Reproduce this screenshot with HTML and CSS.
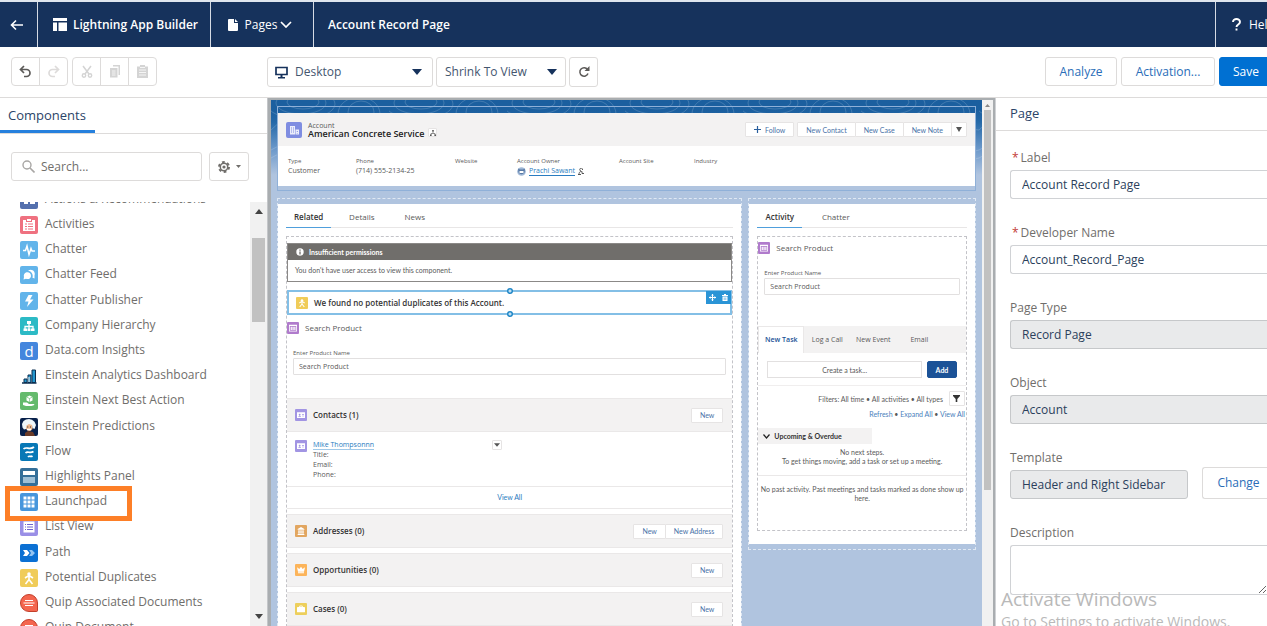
FILE: index.html
```html
<!DOCTYPE html>
<html lang="en">
<head>
<meta charset="utf-8">
<title>Lightning App Builder</title>
<link rel="stylesheet" href="styles.css">
</head>
<body>
<svg class="defs" aria-hidden="true">
  <symbol id="i-down" viewBox="0 0 10 6"><path d="M0 0h10L5 6z" fill="currentColor"/></symbol>
  <symbol id="i-table" viewBox="0 0 18 18"><path d="M3 4h12v2H3zM3 6h1.200v8H3zM13.800 6H15v8h-1.200zM3 13h12v1.200H3zM5.500 7h1.800v5H5.500zM8.200 7h1.800v5H8.200zM10.900 7h1.800v5h-1.800z" fill="#fff"/></symbol>
  <symbol id="i-card" viewBox="0 0 18 18"><path fill="#fff" fill-rule="evenodd" d="M3 5h12v8.500H3zM5 11.500h4c0-2-4-2-4 0zM7 7a1.300 1.300 0 1 0 .01 0zM10.500 7.500h3v1h-3zM10.500 10h3v1h-3z"/></symbol>
  <symbol id="i-dup" viewBox="0 0 18 18"><circle cx="9" cy="5" r="1.800" fill="#fff"/><path d="M5 9l4-2.500L13 9M9 7v4M5.500 15L9 10.500l3.500 4.500" fill="none" stroke="#fff" stroke-width="1.600"/></symbol>
</svg>

<header class="topbar">
  <button class="top-item back" aria-label="Back"><svg width="14" height="12" viewBox="0 0 14 12"><path d="M13 6H2M6 1.500L1.500 6 6 10.500" fill="none" stroke="#fff" stroke-width="1.600"/></svg></button>
  <div class="top-item brand"><svg width="14" height="13" viewBox="0 0 14 13"><path d="M0 0h14v3H0zM0 4.500h4V13H0zM5.500 4.500H14V13H5.500z" fill="#fff"/></svg><strong>Lightning App Builder</strong></div>
  <button class="top-item pages"><svg width="10" height="12" viewBox="0 0 10 12"><path d="M1 0h5v4h4v7q0 1-1 1H1q-1 0-1-1V1q0-1 1-1zM7 0l3 3H7z" fill="#fff"/></svg>Pages<svg class="chev" width="12" height="7" viewBox="0 0 12 7"><path d="M1 1l5 5 5-5" fill="none" stroke="#fff" stroke-width="1.700"/></svg></button>
  <div class="top-item title"><strong>Account Record Page</strong></div>
  <a class="top-item help" href="#"><svg width="9" height="13" viewBox="0 0 9 13"><path d="M1 4C1 0 8 0 8 4c0 2.500-3.500 2.500-3.500 5M4.500 10.500v2" fill="none" stroke="#fff" stroke-width="1.900"/></svg>Help</a>
</header>

<div class="toolbar">
  <div class="group">
    <button aria-label="Undo"><svg width="13" height="13" viewBox="0 0 13 13"><path d="M5 1L1.500 4.500 5 8M2 4.500h5.500a3.500 3.500 0 0 1 0 7H5" fill="none" stroke="#5c5a58" stroke-width="1.700"/></svg></button>
    <button aria-label="Redo" disabled><svg width="13" height="13" viewBox="0 0 13 13"><path d="M8 1l3.500 3.500L8 8M11 4.500H5.500a3.500 3.500 0 0 0 0 7H8" fill="none" stroke="#dddbda" stroke-width="1.700"/></svg></button>
  </div>
  <div class="group">
    <button aria-label="Cut" disabled><svg width="12" height="13" viewBox="0 0 12 13"><path d="M2 1l6 8M10 1L4 9" stroke="#d4d4d4" stroke-width="1.500"/><g fill="none" stroke="#d4d4d4" stroke-width="1.400"><circle cx="3" cy="10.500" r="1.700"/><circle cx="9" cy="10.500" r="1.700"/></g></svg></button>
    <button aria-label="Copy" disabled><svg width="12" height="13" viewBox="0 0 12 13"><path d="M4 0h7v10h-1.500V1.500H4zM1 3h7.500v9.500H1z" fill="#d4d4d4"/><path d="M3 6h3.500M3 8h3.500M3 10h3.500" stroke="#f3f3f3"/></svg></button>
    <button aria-label="Paste" disabled><svg width="11" height="13" viewBox="0 0 11 13"><path d="M0 1.500h3V0h5v1.500h3V13H0z" fill="#d4d4d4"/><path d="M2 5h7M2 7.500h7M2 10h7M3 2.500h5" stroke="#f5f5f5"/></svg></button>
  </div>
  <div class="view-tools">
    <button class="picker device"><svg width="13" height="13" viewBox="0 0 13 13"><path d="M1 1.500h11v7H1z" fill="none" stroke="#16325c" stroke-width="1.700"/><path d="M5.500 9h2v2H10v1.500H3V11h2.500z" fill="#16325c"/></svg><span>Desktop</span><svg class="tri" width="10" height="6"><use href="#i-down"/></svg></button>
    <button class="picker zoom"><span>Shrink To View</span><svg class="tri" width="10" height="6"><use href="#i-down"/></svg></button>
    <button class="picker refresh" aria-label="Refresh"><svg width="12" height="12" viewBox="0 0 12 12"><path d="M9.500 3.500A4.200 4.200 0 1 0 10 7.500" fill="none" stroke="#5c5a58" stroke-width="1.500"/><path d="M11.500 0v5H6.500z" fill="#5c5a58"/></svg></button>
  </div>
  <div class="actions"><button class="analyze">Analyze</button><button class="activation">Activation...</button><button class="save">Save</button></div>
</div>

<main class="workspace">
  <aside class="components">
    <h2>Components</h2>
    <div class="search-row">
      <label class="search"><svg width="13" height="13" viewBox="0 0 13 13"><circle cx="5" cy="5" r="4" fill="none" stroke="#a8a6a4" stroke-width="1.400"/><path d="M8 8l4.500 4.500" stroke="#a8a6a4" stroke-width="1.600"/></svg><input type="text" placeholder="Search..." aria-label="Search components"></label>
      <button class="gear" aria-label="Settings"><svg width="12" height="12" viewBox="0 0 12 12"><circle cx="6" cy="6" r="5" fill="none" stroke="#706e6b" stroke-width="2" stroke-dasharray="2.700 2.536"/><circle cx="6" cy="6" r="3.700" fill="none" stroke="#706e6b" stroke-width="1.500"/><circle cx="6" cy="6" r="1.600" fill="#706e6b"/></svg><svg class="tri" width="5" height="3"><use href="#i-down"/></svg></button>
    </div>
    <div class="list-wrap">
      <ul class="component-list">
        <li><svg class="ico indigo" viewBox="0 0 18 18"><path d="M4 4h4v9H4zM10 6h5v2h-5zM10 10h5v3h-5z" fill="#fff"/></svg>Actions &amp; Recommendations</li>
        <li><svg class="ico pink" viewBox="0 0 18 18"><path d="M3 4h3v2h6V4h3v11H3zM7 3h4v2H7z" fill="#fff"/><path d="M5 8h2M8 8h5M5 10.500h2M8 10.500h5M5 13h2M8 13h5" stroke="#ef7180"/></svg>Activities</li>
        <li><svg class="ico sky" viewBox="0 0 18 18"><path d="M3 9.500h2.500L7 5l2 8.500 2-6 1 2.500h3" fill="none" stroke="#fff" stroke-width="1.500"/></svg>Chatter</li>
        <li><svg class="ico sky" viewBox="0 0 18 18"><path d="M8 4.500c4-2.500 8 1 6.500 5v3l-2-.8c1-3-1-6.500-4.500-7.200z" fill="#fff"/><path d="M3.500 13.500l.5-2.500c-1.500-6 7.500-6.500 7-.8-.4 3-3.500 3.300-5 2.600z" fill="#fff"/></svg>Chatter Feed</li>
        <li><svg class="ico sky" viewBox="0 0 18 18"><path d="M8.500 3h4L10 7.500h3.500L7 15l1.500-5.500H5z" fill="#fff"/></svg>Chatter Publisher</li>
        <li><svg class="ico teal" viewBox="0 0 18 18"><path d="M7 4h4v3H7zM3.500 11.500h3.500V14H3.500zM7.500 11.500h3V14h-3zM11 11.500h3.500V14H11z" fill="#fff"/><path d="M9 6v6M5 12V9.500h8V12" fill="none" stroke="#fff" stroke-width="1.300"/></svg>Company Hierarchy</li>
        <li><span class="ico blue letter">d</span>Data.com Insights</li>
        <li><svg class="ico" viewBox="0 0 18 18"><path d="M4 12h3v3.500H4zM8 8h3v7.500H8zM12 3h3.500v12.500H12z" fill="#2496cd" stroke="#0b2e50"/><path d="M8.500 10h1v5h-1z" fill="#fff"/><path d="M2 16h14.500" stroke="#0b2e50" stroke-width="1.500"/></svg>Einstein Analytics Dashboard</li>
        <li><svg class="ico green" viewBox="0 0 18 18"><path d="M6.500 5l3-1.500 3 1.500v3.500l-3 1.500-3-1.500z" fill="#fff"/><path d="M3 10.500h4l2 1.500h5.500q0 1.500-3 2H6L3 13z" fill="#fff"/><path d="M6.500 5l3 1.500 3-1.500M9.500 6.500V10" fill="none" stroke="#64ba6c" stroke-width=".6"/></svg>Einstein Next Best Action</li>
        <li><svg class="ico navy" viewBox="0 0 18 18"><path d="M5 18v-3l3-2 5 1 2 4z" fill="#6b3b27"/><path d="M6 6h6.500v5q-3 4-6.500 0z" fill="#edb68c"/><path d="M2.500 9.500L2 6l1.500-3L6 1.500 9 1l3 .8 2.500 2L16 7l-1.500 4-2-1-.5-3-3-1-2.500 1.500L6 11l-2 .5z" fill="#eef6fa"/><path d="M7 11.500h4" stroke="#fff" stroke-width="1.300"/><path d="M7.200 9h1M10 9h1" stroke="#333"/></svg>Einstein Predictions</li>
        <li><svg class="ico flow" viewBox="0 0 18 18"><path d="M3.500 6c3-3 6 1.500 10.500-2M5.500 10c2.500-2.500 4 1 8-1.500M8 14c1.500-2 2.500.5 4.500-1" fill="none" stroke="#fff" stroke-width="1.700"/></svg>Flow</li>
        <li><svg class="ico steel" viewBox="0 0 18 18"><path d="M3 3h12v4H3z" fill="#fff"/><path d="M3 9h12v6H3z" fill="#9fc0d6"/></svg>Highlights Panel</li>
        <li><svg class="ico launch" viewBox="0 0 18 18"><path d="M3.500 3.500h3v3h-3zM7.500 3.500h3v3h-3zM11.500 3.500h3v3h-3zM3.500 7.500h3v3h-3zM7.500 7.500h3v3h-3zM11.500 7.500h3v3h-3zM3.500 11.500h3v3h-3zM7.500 11.500h3v3h-3zM11.500 11.500h3v3h-3z" fill="#fff"/></svg>Launchpad</li>
        <li><svg class="ico violet" viewBox="0 0 18 18"><path d="M3.500 3.500h11v11h-11z" fill="#fff"/><path d="M5 6.500h1M7 6.500h6M5 9h1M7 9h6M5 11.500h1M7 11.500h6" stroke="#6f63cf"/></svg>List View</li>
        <li><svg class="ico path" viewBox="0 0 18 18"><path d="M3 6h4l2.500 3L7 12H3l2-3z" fill="#fff"/><path d="M9 6h3l3 3-3 3H9l2-3z" fill="#93c4f2"/></svg>Path</li>
        <li><svg class="ico gold"><use href="#i-dup"/></svg>Potential Duplicates</li>
        <li><svg class="ico" viewBox="0 0 18 18"><path d="M9 .5a8.500 8.500 0 1 0 0 17h8.500V9A8.500 8.500 0 0 0 9 .5z" fill="#f4664f" stroke="#c23f2b"/><path d="M5 6.500h8M3.500 9h11M5 11.500h8" stroke="#fff" stroke-width="1.200"/></svg>Quip Associated Documents</li>
        <li><svg class="ico" viewBox="0 0 18 18"><path d="M9 .5a8.500 8.500 0 1 0 0 17h8.500V9A8.500 8.500 0 0 0 9 .5z" fill="#f4664f" stroke="#c23f2b"/><path d="M5 6.500h8M3.500 9h11M5 11.500h8" stroke="#fff" stroke-width="1.200"/></svg>Quip Document</li>
      </ul>
      <div class="scrollbar"><svg width="8" height="5" viewBox="0 0 8 5"><path d="M0 5l4-5 4 5z" fill="#444"/></svg><span class="thumb"></span><svg class="end" width="8" height="5"><use href="#i-down"/></svg></div>
    </div>
    <div class="highlight"></div>
  </aside>

  <section class="canvas">
    <div class="page">
      <svg class="contours" width="100%" height="80" aria-hidden="true">
        <defs><pattern id="topo" width="118" height="80" patternUnits="userSpaceOnUse"><g fill="none" stroke="#fff" stroke-opacity=".16"><ellipse cx="30" cy="4" rx="34" ry="15"/><ellipse cx="30" cy="3" rx="25" ry="11"/><ellipse cx="32" cy="2" rx="16" ry="7"/><ellipse cx="88" cy="14" rx="21" ry="17"/><ellipse cx="90" cy="12" rx="13" ry="11"/><path d="M0 30q14-16 30-8t34 6 54 2M0 50q30-18 60-4t58 4M0 58q30-18 60-4t58 4"/></g></pattern></defs>
        <rect width="100%" height="80" fill="url(#topo)"/>
      </svg>
      <div class="region head-region">
        <div class="card record">
          <div class="record-head">
            <svg class="rec-ico acct" viewBox="0 0 16 16"><path d="M4 4h5v8.500H4zM9.500 7.500H13v5H9.500z" fill="#fff" opacity=".85"/><path d="M5.500 5.500v5M7.500 5.500v5M11.300 9v2.500" stroke="#7f8de1" stroke-dasharray="1 1"/></svg>
            <div class="rec-name"><small>Account</small><h1>American Concrete Service</h1></div>
            <button class="mini tree" aria-label="View hierarchy"><svg width="6" height="6" viewBox="0 0 6 6"><path d="M3 1v2.500M1 5V3.500h4V5" fill="none" stroke="#777" stroke-width=".8"/><path d="M2.200 0h1.600v1.600H2.200zM0 4.500h1.600V6H0zM4.400 4.500H6V6H4.400z" fill="#555"/></svg></button>
            <div class="rec-actions">
              <button class="mini follow"><svg width="7" height="7" viewBox="0 0 7 7"><path d="M3.500 0v7M0 3.500h7" stroke="#2a5f9e" stroke-width="1.200"/></svg>Follow</button>
              <div class="mini-group"><button class="mini">New Contact</button><button class="mini">New Case</button><button class="mini">New Note</button><button class="mini caret" aria-label="More actions"><svg width="6" height="5" viewBox="0 0 10 6" preserveAspectRatio="none"><path d="M0 0h10L5 6z" fill="#555"/></svg></button></div>
            </div>
          </div>
          <dl class="fields">
            <div><dt>Type</dt><dd>Customer</dd></div>
            <div><dt>Phone</dt><dd>(714) 555-2134-25</dd></div>
            <div><dt>Website</dt></div>
            <div><dt>Account Owner</dt><dd class="owner"><svg width="9" height="9" viewBox="0 0 9 9"><circle cx="4.500" cy="4.500" r="4.300" fill="#9fb7d6"/><path d="M1 1.500l2 1h3l2-1-.5 4Q4.500 9 1.500 5.500z" fill="#587aa6"/><path d="M2.500 4h4v2h-4z" fill="#fff"/></svg><a href="#">Prachi Sawant</a><svg width="6" height="7" viewBox="0 0 6 7"><path d="M3 3a1.400 1.400 0 1 1 1.500-1M1 6.500c0-3 1.500-3 3-3v2h2M0 6.500h3" fill="none" stroke="#555"/></svg></dd></div>
            <div><dt>Account Site</dt></div>
            <div><dt>Industry</dt></div>
          </dl>
        </div>
      </div>

      <div class="columns">
        <div class="region main-region">
          <div class="card">
            <nav class="tabs"><button class="tab on">Related</button><button class="tab">Details</button><button class="tab">News</button></nav>
            <div class="dropzone">
              <div class="notice"><h3><svg width="8" height="8" viewBox="0 0 8 8"><circle cx="4" cy="4" r="3.700" fill="#fff"/><path d="M4 3.500V6.500M4 1.500v1.200" stroke="#706e6b" stroke-width="1.300"/></svg>Insufficient permissions</h3><p>You don't have user access to view this component.</p></div>
              <div class="selected"><svg class="sm-ico gold"><use href="#i-dup"/></svg><strong>We found no potential duplicates of this Account.</strong>
                <span class="dot top"></span><span class="dot bottom"></span>
                <span class="sel-tools"><svg width="7" height="7" viewBox="0 0 7 7"><path d="M3.500 0v7M0 3.500h7" stroke="#fff"/><path d="M2 1.500L3.500 0 5 1.500zM2 5.500L3.500 7 5 5.500zM1.500 2L0 3.500 1.500 5zM5.500 2L7 3.500 5.500 5z" fill="#fff"/></svg><svg width="6" height="7" viewBox="0 0 6 7"><path d="M0 1h2V0h2v1h2v1H0zM.5 2.500h5V7h-5z" fill="#fff"/><path d="M2.200 3.500v2.500M3.800 3.500v2.500" stroke="#2a94d6" stroke-width=".6"/></svg></span>
              </div>
              <div class="product"><h3><svg class="prod-ico"><use href="#i-table"/></svg>Search Product</h3><label for="p1">Enter Product Name</label><input id="p1" type="text" placeholder="Search Product"></div>
              <section class="related contacts">
                <header><svg class="sm-ico lilac"><use href="#i-card"/></svg><h3>Contacts (1)</h3><div class="mini-group"><button class="mini">New</button></div></header>
                <div class="contact"><svg class="sm-ico lilac"><use href="#i-card"/></svg><div class="contact-text"><a href="#">Mike Thompsonnn</a><p>Title:</p><p>Email:</p><p>Phone:</p></div><button class="mini tiny" aria-label="Contact actions"><svg width="6" height="4"><use href="#i-down"/></svg></button></div>
                <a class="view-all" href="#">View All</a>
              </section>
              <section class="related"><header><svg class="sm-ico tan" viewBox="0 0 18 18"><path d="M4 6l5-3 5 3v1H4zM5 8h2v5H5zM8 8h2v5H8zM11 8h2v5h-2zM4 13.500h10V15H4z" fill="#fff"/></svg><h3>Addresses (0)</h3><div class="mini-group"><button class="mini">New</button><button class="mini">New Address</button></div></header></section>
              <section class="related"><header><svg class="sm-ico orange" viewBox="0 0 18 18"><path d="M3 5l3.500 2.500L9 4l2.500 3.500L15 5l-1.500 6.500h-9zM4.500 12.500h9V14h-9z" fill="#fff"/></svg><h3>Opportunities (0)</h3><div class="mini-group"><button class="mini">New</button></div></header></section>
              <section class="related"><header><svg class="sm-ico yellow" viewBox="0 0 18 18"><path d="M4 6h10q1 0 1 1v6q0 1-1 1H4q-1 0-1-1V7q0-1 1-1z" fill="#fff"/><path d="M7 6V4.500h4V6" fill="none" stroke="#fff" stroke-width="1.300"/></svg><h3>Cases (0)</h3><div class="mini-group"><button class="mini">New</button></div></header></section>
            </div>
          </div>
        </div>

        <div class="region side-region">
          <div class="card">
            <nav class="tabs"><button class="tab on">Activity</button><button class="tab">Chatter</button></nav>
            <div class="dropzone">
              <div class="product"><h3><svg class="prod-ico"><use href="#i-table"/></svg>Search Product</h3><label for="p2">Enter Product Name</label><input id="p2" type="text" placeholder="Search Product"></div>
              <nav class="act-tabs"><button class="on">New Task</button><button>Log a Call</button><button>New Event</button><button>Email</button></nav>
              <div class="composer"><input type="text" placeholder="Create a task..." aria-label="Create a task"><button>Add</button></div>
              <div class="filters"><span>Filters: All time • All activities • All types</span><button class="mini funnel" aria-label="Filter"><svg width="7" height="7" viewBox="0 0 7 7"><path d="M0 0h7v1L4.300 4v3H2.700V4L0 1z" fill="#333"/></svg></button></div>
              <p class="links"><a href="#">Refresh</a> • <a href="#">Expand All</a> • <a href="#">View All</a></p>
              <h4><svg width="7" height="5" viewBox="0 0 7 5"><path d="M.5.5l3 3.500 3-3.500" fill="none" stroke="#222" stroke-width="1.200"/></svg>Upcoming &amp; Overdue</h4>
              <p class="steps">No next steps.<br>To get things moving, add a task or set up a meeting.</p>
              <p class="past">No past activity. Past meetings and tasks marked as done show up here.</p>
            </div>
          </div>
        </div>
      </div>
    </div>
    <div class="canvas-scroll"><svg width="5" height="3" viewBox="0 0 10 6"><path d="M0 6h10L5 0z" fill="#888"/></svg><span></span></div>
  </section>

  <aside class="properties">
    <h2>Page</h2>
    <form>
      <label for="f1"><abbr>*</abbr>Label</label><input id="f1" type="text" value="Account Record Page">
      <label for="f2"><abbr>*</abbr>Developer Name</label><input id="f2" type="text" value="Account_Record_Page">
      <label for="f3">Page Type</label><input id="f3" type="text" value="Record Page" disabled>
      <label for="f4">Object</label><input id="f4" type="text" value="Account" disabled>
      <label for="f5">Template</label><div class="template"><input id="f5" type="text" value="Header and Right Sidebar" disabled><button type="button">Change</button></div>
      <label for="f6">Description</label><textarea id="f6"></textarea>
    </form>
    <div class="watermark"><p>Activate Windows</p><p class="sub">Go to Settings to activate Windows.</p></div>
  </aside>
</main>
</body>
</html>
```

FILE: styles.css
```css
* { box-sizing: border-box; }
:root { --ui: "Open Sans", "Noto Sans", sans-serif; --compact: Lato, "Open Sans", sans-serif; --line: #dddbda; }
body, h1, h2, h3, h4, p, ul, dl, dd { margin: 0; padding: 0; }
body { height: 100vh; display: flex; flex-direction: column; overflow: hidden; background: #fff; color: #706e6b; font: 12px/18px var(--ui); }
button, input, textarea { font: inherit; color: inherit; }
button { padding: 0; background: #fff; border: 1px solid var(--line); border-radius: 3px; display: flex; align-items: center; justify-content: center; white-space: nowrap; }
a { color: #2a7cc0; text-decoration: none; }
strong { font-weight: 600; }
svg { display: block; flex: none; }
.defs { position: absolute; width: 0; height: 0; }

.topbar { flex: none; height: 47px; border-top: 2px solid #dfe6ee; background: #16325c; display: flex; color: #fff; }
.top-item { background: none; border: 0; border-radius: 0; border-right: 1px solid #d5dbe4; display: flex; align-items: center; color: #fff; white-space: nowrap; }
.back { width: 38px; padding-right: 3px; }
.brand { padding-left: 15px; gap: 6px; width: 173px; }
.pages { width: 103px; gap: 7px; padding-right: 4px; }
.pages .chev { margin-left: -4px; }
.title { padding-left: 14px; flex: 1; }
.help { flex: none; width: 51px; overflow: hidden; gap: 8px; padding-left: 16px; border-right: 0; }

.toolbar { flex: none; height: 51px; border-bottom: 1px solid var(--line); display: flex; padding: 10px 0 0 11px; gap: 4px; overflow: hidden; }
.toolbar button { height: 29px; }
.group { display: flex; }
.group button { width: 29px; border-radius: 0; margin-right: -1px; }
.group button:first-child { border-radius: 4px 0 0 4px; }
.group button:last-child { border-radius: 0 4px 4px 0; margin-right: 0; }
.view-tools { display: flex; gap: 3px; margin-left: 106px; }
.view-tools .picker { height: 30px; color: #44566f; }
.picker span { flex: 1; text-align: left; }
.picker .tri { color: #16325c; }
.device { width: 166px; padding: 0 10px 0 7px; gap: 7px; }
.zoom { width: 130px; padding: 0 8px; }
.refresh { width: 29px; }
.actions { display: flex; gap: 4px; margin-left: auto; margin-right: -6px; color: #2a6db8; }
.analyze { width: 72px; }
.activation { width: 94px; }
.actions .save { width: 54px; background: #0070d2; border-color: #0070d2; color: #fff; }

.workspace { flex: 1; min-height: 0; display: flex; }
.components { flex: none; width: 268px; position: relative; display: flex; flex-direction: column; border-right: 1px solid #c4c6c9; }
.components h2 { font-size: 13px; font-weight: 400; color: #2b4468; height: 36px; line-height: 34px; padding-left: 8px; border-bottom: 1px solid var(--line); background: linear-gradient(#2680dd, #2680dd) 0 100% / 95px 3px no-repeat; }
.search-row { display: flex; gap: 7px; padding: 18px 18px 21px 11px; }
.search { flex: 1; display: flex; align-items: center; gap: 6px; padding-left: 10px; height: 29px; border: 1px solid var(--line); border-radius: 3px; }
.search input { border: 0; padding: 0; width: 100%; min-width: 0; outline: 0; background: none; }
::placeholder { color: inherit; opacity: 1; }
.gear { width: 40px; height: 29px; gap: 6px; }
.list-wrap { flex: 1; min-height: 0; display: flex; overflow: hidden; }
.component-list { flex: 1; list-style: none; padding-left: 20px; margin-top: -12px; }
.component-list li { display: flex; gap: 7px; height: 25px; white-space: nowrap; }
.component-list li:nth-child(5n+4) { margin-bottom: 1px; }
.ico { width: 18px; height: 18px; border-radius: 2px; margin-top: 1px; }
.letter { color: #fff; font-size: 15px; line-height: 18px; text-align: center; }
.indigo { background: #5470ae; } .pink { background: #ef7180; } .sky { background: #62b4ea; } .teal { background: #2cbac5; } .blue { background: #4486dd; } .green { background: #64ba6c; } .navy { background: #08214b; } .flow { background: #0878b6; } .steel { background: #346f99; } .launch { background: #4796dc; } .violet { background: #9a8fe6; } .path { background: #0b70d3; } .gold { background: #f0cc59; }
.lilac { background: #a295e3; } .tan { background: #e2a660; } .orange { background: #fcb45a; } .yellow { background: #edcf5c; } .acct { background: #7f8de1; }
.scrollbar { width: 17px; background: #f1f1f1; display: flex; flex-direction: column; align-items: center; padding: 7px 0; color: #444; }
.scrollbar .thumb { width: 13px; height: 84px; background: #c1c1c1; margin-top: 24px; }
.scrollbar .end { margin-top: auto; }
.highlight { position: absolute; left: 5px; top: 388px; width: 127px; height: 35px; border: 5px solid #fd7f27; }

.canvas { flex: 1; min-width: 0; display: flex; border: solid #a9adb0; border-width: 2px 2px 0 3px; background: #b0c4df; }
.page { flex: 1; min-width: 0; overflow: hidden; position: relative; background: linear-gradient(#1b5f9f 10px, #2569a8 22px, #6e9acb 50px, #b0c4df 75px); padding: 6px 6px 0; color: #5a5a5a; font-size: 7px; line-height: 10px; }
.contours { position: absolute; left: 0; top: 0; }
.canvas-scroll { width: 11px; flex: none; background: #f1f1f1; display: flex; flex-direction: column; align-items: center; padding-top: 4px; gap: 3px; }
.canvas-scroll span { width: 7px; height: 380px; background: #c1c1c1; }
.region { position: relative; border: 1px dashed #dfe8f3; }
.head-region { padding: 6px 0 4px; border: 1px solid #8fb0d8; }
.card { background: #fff; }
.record-head { height: 33px; background: #f3f2f2; display: flex; align-items: center; padding: 0 8px; }
.rec-ico { width: 16px; height: 16px; border-radius: 2px; margin-right: 6px; }
.rec-name small { display: block; font-size: 7px; line-height: 7px; }
.rec-name h1 { font-size: 9px; line-height: 9px; font-weight: 600; color: #222; white-space: nowrap; }
.mini { height: 15px; padding: 0 8px; border: 1px solid #e6e4e4; border-radius: 1px; color: #4a72a8; font-family: var(--compact); }
.tree { width: 9px; height: 9px; padding: 0; margin: 6px 0 0 4px; }
.rec-actions { margin-left: auto; display: flex; gap: 3px; }
.follow { gap: 4px; }
.mini-group { display: flex; }
.mini-group .mini + .mini { margin-left: -1px; }
.caret { width: 16px; padding: 0; }
.fields { height: 40px; padding: 10px 10px 0; display: grid; grid-template-columns: 68fr 99fr 62fr 102fr 75fr 271fr; white-space: nowrap; }
.fields dt { font-size: 6px; line-height: 10px; }
.owner { display: flex; align-items: center; gap: 3px; }
.owner a { border-bottom: 1px solid #2a7cc0; line-height: 9px; }

.columns { display: grid; grid-template-columns: 466fr 228fr; gap: 6px; align-items: start; margin-top: 7px; }
.main-region, .side-region { padding-top: 5px; }
.side-region { padding-bottom: 5px; }
.columns .card { padding: 0 8px 13px; }
.tabs { display: flex; gap: 8px; height: 24px; border-bottom: 1px solid #e8e6e6; }
.tab { height: 24px; border: 0; border-radius: 0; background: none; padding: 2px 8px 0; font-size: 8px; min-width: 45px; }
.tab.on { font-weight: 600; color: #333; border-bottom: 1px solid #4f9fdc; }
.side-region .tabs { gap: 11px; }
.dropzone { margin-top: 8px; border: 1px dashed #c3c3c8; }
.notice { margin-top: 6px; border: 1px solid #8b8987; font-family: var(--compact); }
.notice h3 { background: #706e6b; color: #fff; font-size: 7px; height: 16px; display: flex; align-items: center; gap: 5px; padding-left: 8px; }
.notice p { line-height: 21px; padding-left: 7px; }
.selected { position: relative; display: flex; align-items: center; gap: 6px; margin-top: 8px; height: 25px; padding-left: 7px; border: 2px solid #83bfe6; color: #333; font-size: 8px; }
.sm-ico { width: 12px; height: 12px; border-radius: 1px; }
.dot { position: absolute; left: 50%; margin-left: -3px; width: 6px; height: 6px; border-radius: 50%; background: radial-gradient(#bfe0f5 1px, #1f86c6 2px); }
.dot.top { top: -4px; } .dot.bottom { bottom: -4px; }
.sel-tools { position: absolute; right: -1px; top: -1px; width: 25px; height: 13px; background: #2a94d6; display: flex; align-items: center; justify-content: space-around; }
.product { padding: 7px 6px 0; }
.product h3 { display: flex; align-items: center; gap: 6px; margin-left: -6px; font-size: 8px; font-weight: 400; line-height: 12px; }
.prod-ico { width: 12px; height: 12px; border-radius: 1px; background: #b07bcc; }
.product label { display: block; font-size: 6px; line-height: 8px; margin-top: 15px; }
.product input { display: block; width: 100%; height: 17px; border: 1px solid #e2e0e0; border-radius: 1px; padding: 0 5px; margin-top: 1px; }
.contacts { margin-top: 23px; }
.related { border: 1px solid #eae8e8; border-width: 1px 0; margin-bottom: 5px; }
.related header { height: 32px; background: #f3f2f2; display: flex; align-items: center; gap: 6px; padding: 0 9px 0 8px; }
.related h3 { flex: 1; font-size: 8px; font-weight: 600; color: #333; }
.contact { display: flex; gap: 6px; height: 55px; padding: 8px; border-top: 1px solid #eae8e8; }
.contact-text { width: 173px; }
.contact-text p { line-height: 10px; }
.contact a { border-bottom: 1px solid #9fc8e8; }
.tiny { width: 10px; height: 10px; padding: 0; color: #555; }
.view-all { display: block; text-align: center; line-height: 21px; border-top: 1px solid #eae8e8; font-family: var(--compact); }

.side-region .dropzone { padding-bottom: 27px; }
.side-region .product { padding-top: 5px; }
.act-tabs { display: flex; margin-top: 31px; height: 27px; background: #f3f2f2; }
.act-tabs button { width: 46px; border: 0; background: none; border-radius: 0; }
.act-tabs .on { background: #fff; font-weight: 600; color: #1b5297; border: 1px solid #eae8e8; border-bottom: 0; }
.composer { display: flex; gap: 5px; padding: 8px 9px 7px; border-bottom: 1px solid #f0eeee; font-family: var(--compact); }
.composer input { flex: 1; min-width: 0; height: 17px; border: 1px solid #e2e0e0; text-align: center; padding: 0; }
.composer button { width: 30px; height: 17px; background: #1b5297; border-color: #1b5297; color: #fff; font-weight: 700; border-radius: 2px; }
.filters { display: flex; justify-content: flex-end; align-items: center; gap: 6px; padding: 5px 1px 0 0; white-space: nowrap; font-family: var(--compact); }
.funnel { width: 16px; height: 15px; padding: 0; }
.links { text-align: right; padding: 3px 1px 0 0; font-family: var(--compact); }
.links a { color: #4a7fbd; }
.dropzone h4 { display: flex; align-items: center; gap: 4px; width: 114px; height: 16px; margin-top: 9px; padding-left: 5px; background: #f3f2f2; color: #333; font-weight: 700; white-space: nowrap; font-family: var(--compact); }
.steps, .past { text-align: center; line-height: 9px; font-family: var(--compact); }
.steps { padding: 4px 0 9px; border-bottom: 1px solid #eae8e8; }
.past { padding: 9px 2px 0; }

.properties { flex: none; width: 272px; position: relative; overflow: hidden; border-left: 1px solid #d0d2d5; }
.properties h2 { font-size: 13px; font-weight: 400; color: #2b4468; height: 33px; line-height: 31px; padding-left: 14px; border-bottom: 1px solid var(--line); }
.properties form { padding: 18px 0 0 14px; }
.properties label { display: block; margin-bottom: 3px; }
.properties abbr { color: #c23934; margin: 0 2px; }
.properties input { display: block; width: 100%; height: 29px; margin-bottom: 25px; padding: 0 11px; border: 1px solid #d0d2d5; border-right: 0; border-radius: 3px 0 0 3px; color: #2b3f5c; background: #fff; }
.properties input:disabled { background: #e9eaeb; border-color: #c6c8ca; }
.template { display: flex; gap: 14px; }
.template input { width: 178px; border-right: 1px solid #c6c8ca; border-radius: 3px; }
.template button { flex: 1; height: 32px; margin-top: -3px; padding-left: 7px; border-right: 0; border-radius: 3px 0 0 3px; color: #2a6db8; }
.properties textarea { display: block; width: 100%; height: 50px; border: 1px solid #d0d2d5; border-right: 0; border-radius: 3px 0 0 3px; }
.watermark { position: absolute; left: 5px; top: 488px; color: #b9b9b9; white-space: nowrap; }
.watermark p { font-size: 19px; line-height: 26px; }
.watermark .sub { font-size: 14px; line-height: 20px; }
```
